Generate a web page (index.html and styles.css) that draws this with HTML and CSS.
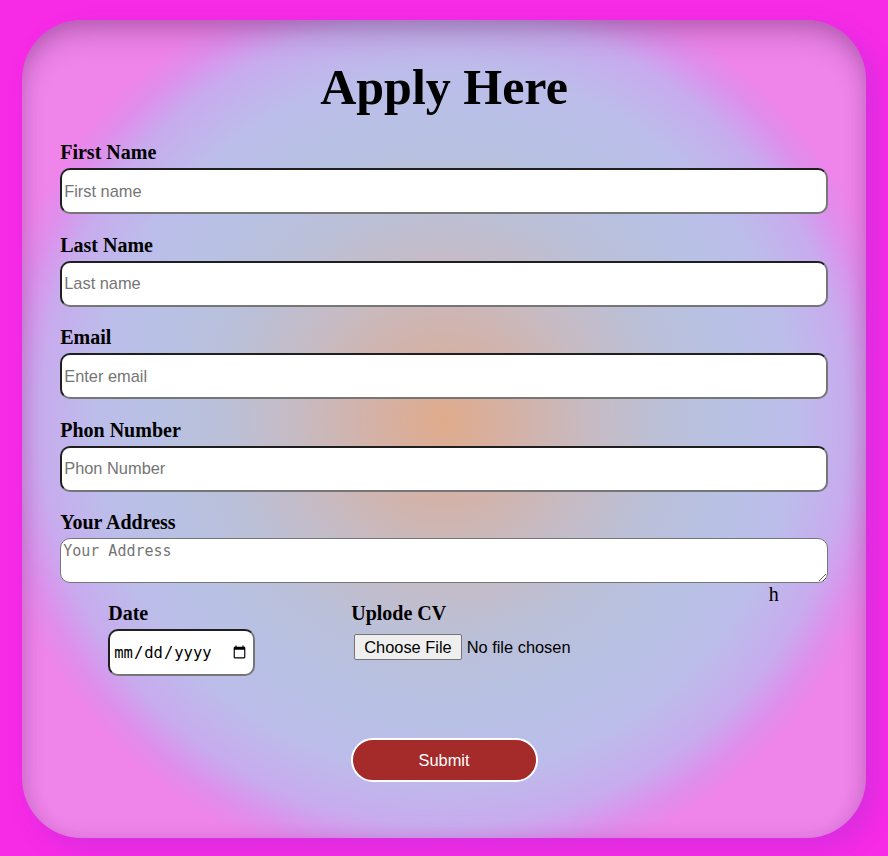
FILE: index.html
```html
<!DOCTYPE html>
<html lang="en">
<head>
<meta charset="utf-8">
<title>Apply Here</title>
<link rel="stylesheet" href="styles.css">
</head>
<body>
<div class="card">
  <h1 class="title">Apply Here</h1>
  <form class="form" onsubmit="return false">
    <div class="field">
      <label class="label" for="fn">First Name</label>
      <input class="text-input" id="fn" type="text" placeholder="First name">
    </div>
    <div class="field">
      <label class="label" for="ln">Last Name</label>
      <input class="text-input" id="ln" type="text" placeholder="Last name">
    </div>
    <div class="field">
      <label class="label" for="em">Email</label>
      <input class="text-input" id="em" type="email" placeholder="Enter email">
    </div>
    <div class="field">
      <label class="label" for="ph">Phon Number</label>
      <input class="text-input" id="ph" type="text" placeholder="Phon Number">
    </div>
    <div class="field field-last">
      <label class="label" for="ad">Your Address</label>
      <textarea class="area" id="ad" placeholder="Your Address"></textarea>
    </div>
    <div class="stray">h</div>
    <div class="row">
      <div class="date-block">
        <label class="label" for="dt">Date</label>
        <input class="date-input" id="dt" type="date">
      </div>
      <div class="file-block">
        <label class="label" for="cv">Uplode CV</label>
        <input class="file-input" id="cv" type="file">
      </div>
    </div>
    <div class="actions">
      <button class="submit" type="submit">Submit</button>
    </div>
  </form>
</div>
</body>
</html>
```
FILE: styles.css
```css
html, body {
  margin: 0;
  padding: 0;
}
body {
  background: #f72ae6;
  padding-top: 20px;
  height: 856px;
  box-sizing: border-box;
  font-family: "Liberation Serif", "Times New Roman", serif;
  overflow: hidden;
}
.card {
  width: 95%;
  height: 818px;
  margin: 0 auto;
  box-sizing: border-box;
  padding: 41px 38px 0 38px;
  border-radius: 60px;
  background: radial-gradient(circle at 50% 49%,
    #dfab8b 0px,
    #d6b0a2 60px,
    #c6bbc4 150px,
    #bbc0d8 220px,
    #b8c1e4 290px,
    #bcbdea 350px,
    #c8abee 405px,
    #df8eec 438px,
    #ef84eb 462px,
    #ef84eb 600px);
  box-shadow: inset 0 18px 30px -8px rgba(70, 20, 70, 0.32),
              inset 0 0 18px rgba(90, 20, 90, 0.14),
              10px 10px 25px rgba(110, 60, 200, 0.22);
}
.title {
  margin: 0;
  font-size: 50px;
  font-weight: bold;
  text-align: center;
  line-height: 53px;
  color: #000;
}
.form {
  margin-top: 27px;
}
.field {
  margin-bottom: 19.5px;
}
.field-last {
  margin-bottom: 0;
}
.label {
  display: block;
  font-size: 20px;
  font-weight: bold;
  line-height: 23px;
  margin-bottom: 4px;
  color: #000;
}
.text-input {
  display: block;
  width: 100%;
  height: 46px;
  box-sizing: border-box;
  padding: 1px 2px;
  border: 2px solid;
  border-color: #1f1f1f #767676 #767676 #1f1f1f;
  border-radius: 10px;
  background: #fff;
  font-family: "Liberation Sans", Arial, sans-serif;
  font-size: 16.4px;
  color: #000;
}
.text-input::placeholder {
  color: #757575;
}
.area {
  display: block;
  width: 100%;
  height: 45px;
  box-sizing: border-box;
  padding: 3px 2px;
  border: 1px solid #767676;
  border-radius: 10px;
  background: #fff;
  font-family: "DejaVu Sans Mono", monospace;
  font-size: 15px;
  margin: 0;
}
.area::placeholder {
  color: #757575;
}
.stray {
  height: 19px;
  line-height: 23px;
  font-size: 20px;
  text-align: right;
  padding-right: 49px;
}
.row {
  display: flex;
  align-items: flex-start;
}
.date-block {
  margin-left: 48px;
  display: flex;
  flex-direction: column;
}
.date-input {
  width: 147px;
  height: 47px;
  box-sizing: border-box;
  padding: 1px 4px 1px 3px;
  border: 2px solid;
  border-color: #1f1f1f #767676 #767676 #1f1f1f;
  border-radius: 10px;
  background: #fff;
  font-family: "DejaVu Sans Mono", monospace;
  font-size: 15.5px;
  color: #000;
}
.file-block {
  margin-left: 96px;
  display: flex;
  flex-direction: column;
}
.file-input {
  margin: 5px 0 0 3px;
  font-family: "Liberation Sans", Arial, sans-serif;
  font-size: 16.4px;
  color: #000;
}
.file-input::file-selector-button {
  font-family: "Liberation Sans", Arial, sans-serif;
  font-size: 16.4px;
  padding: 2.5px 9px;
  margin-right: 5px;
  border: 1px solid #767676;
  border-radius: 2px;
  background: #efefef;
  color: #000;
}
.actions {
  display: flex;
  justify-content: center;
  margin-top: 62px;
}
.submit {
  width: 187px;
  height: 44px;
  box-sizing: border-box;
  border: 2px solid #fff;
  border-radius: 22px;
  background: #a52a2a;
  color: #fff;
  font-family: "Liberation Sans", Arial, sans-serif;
  font-size: 16.4px;
  cursor: pointer;
}
```
